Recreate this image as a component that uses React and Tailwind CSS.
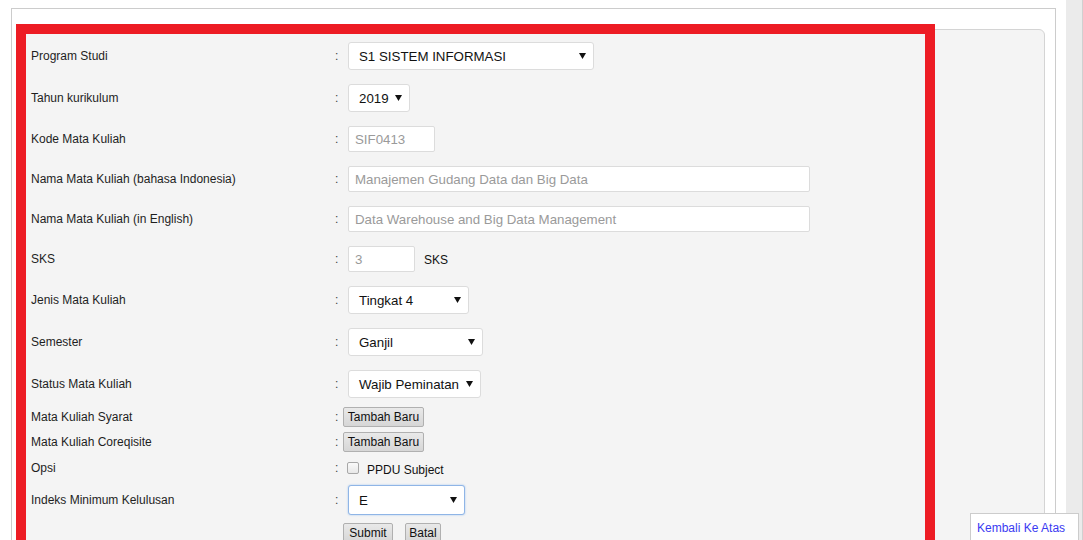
const font = { fontFamily: '"Liberation Sans", Arial, sans-serif' };

function Arrow() {
  return (
    <svg width="7" height="6" viewBox="0 0 7 6" className="absolute right-[7px] top-1/2 -translate-y-1/2">
      <path d="M0 0 H7 L3.5 6 Z" fill="#111" />
    </svg>
  );
}

function Select({ value, w, focused }) {
  return (
    <div
      className={`relative ${focused ? 'h-[30px] border-[#8fb5e6] shadow-[0_0_2px_#9cc0ee]' : 'h-[28px] border-[#dcdcdc]'} ${w} bg-white rounded-[3px] border flex items-center pl-[10px] pt-[1px] text-[13.3px] text-[#111]`}
    >
      {value}
      <Arrow />
    </div>
  );
}

function Input({ value, w }) {
  return (
    <div className={`h-[26px] ${w} bg-white rounded-[2px] border border-[#dcdcdc] flex items-center pl-[6px] pt-[1px] text-[13.3px] text-[#9a9a9a]`}>
      {value}
    </div>
  );
}

function Button({ children, w }) {
  return (
    <div className={`h-[20px] ${w} rounded-[2px] border border-[#b0b0b0] bg-gradient-to-b from-[#e9e9e9] to-[#d6d6d6] flex items-center justify-center text-[12px] text-[#111]`}>
      {children}
    </div>
  );
}

function Row({ label, h, children }) {
  return (
    <div className={`flex items-center ${h}`}>
      <div className="w-[304px] text-[12px] text-[#1e1e1e]">{label}</div>
      <div className="w-[13px] text-[12px] text-[#444]">:</div>
      <div className="flex items-center">{children}</div>
    </div>
  );
}

export default function App() {
  return (
    <div className="relative w-[1083px] h-[540px] overflow-hidden bg-white flex" style={font}>
      <div className="w-[1066px] pt-[8px] pl-[11px] pr-[10px]">
        <div className="border border-[#cccccc] h-[600px] pt-[20px] pl-[9px] pr-[10px]">
          <div className="bg-[#f4f4f4] border border-[#d4d4d4] rounded-tr-[6px] h-[600px] pt-[5px] pl-[9px]">
            <Row label="Program Studi" h="h-[42px]">
              <Select value="S1 SISTEM INFORMASI" w="w-[246px]" />
            </Row>
            <Row label="Tahun kurikulum" h="h-[42px]">
              <Select value="2019" w="w-[62px]" />
            </Row>
            <Row label="Kode Mata Kuliah" h="h-[40px]">
              <Input value="SIF0413" w="w-[87px]" />
            </Row>
            <Row label="Nama Mata Kuliah (bahasa Indonesia)" h="h-[40px]">
              <Input value="Manajemen Gudang Data dan Big Data" w="w-[462px]" />
            </Row>
            <Row label="Nama Mata Kuliah (in English)" h="h-[40px]">
              <Input value="Data Warehouse and Big Data Management" w="w-[462px]" />
            </Row>
            <Row label="SKS" h="h-[40px]">
              <Input value="3" w="w-[67px]" />
              <span className="ml-[9px] mt-[2px] text-[12px] text-[#111]">SKS</span>
            </Row>
            <Row label="Jenis Mata Kuliah" h="h-[42px]">
              <Select value="Tingkat 4" w="w-[121px]" />
            </Row>
            <Row label="Semester" h="h-[42px]">
              <Select value="Ganjil" w="w-[135px]" />
            </Row>
            <Row label="Status Mata Kuliah" h="h-[42px]">
              <Select value="Wajib Peminatan" w="w-[133px]" />
            </Row>
            <Row label="Mata Kuliah Syarat" h="h-[23px]">
              <div className="-ml-[5px]">
                <Button w="w-[81px]">Tambah Baru</Button>
              </div>
            </Row>
            <Row label="Mata Kuliah Coreqisite" h="h-[28px]">
              <div className="-ml-[5px]">
                <Button w="w-[81px]">Tambah Baru</Button>
              </div>
            </Row>
            <Row label="Opsi" h="h-[24px]">
              <div className="-ml-[1px] w-[12px] h-[12px] rounded-[2px] border border-[#a8a8a8] bg-gradient-to-b from-[#fafafa] to-[#e8e8e8]" />
              <span className="ml-[8px] mt-[4px] text-[12px] text-[#111]">PPDU Subject</span>
            </Row>
            <Row label="Indeks Minimum Kelulusan" h="h-[40px]">
              <Select value="E" w="w-[117px]" focused />
            </Row>
            <div className="flex items-start h-[28px] pt-[3px] pl-[312px] gap-[12px]">
              <Button w="w-[50px]">Submit</Button>
              <Button w="w-[36px]">Batal</Button>
            </div>
          </div>
        </div>
      </div>
      <div className="w-[17px] h-full bg-[#ebebeb] border-r border-[#d0d0d0]" />

      <div className="absolute left-[16px] top-[24px] w-[919px] h-[600px] border-[10px] border-[#ed1c24] pointer-events-none" />

      <div className="absolute left-[970px] top-[513px] w-[109px] h-[40px] bg-white border border-[#cccccc] pl-[6px] pt-[5px] text-[12px] text-[#3a3af2]">
        Kembali Ke Atas
      </div>
    </div>
  );
}
